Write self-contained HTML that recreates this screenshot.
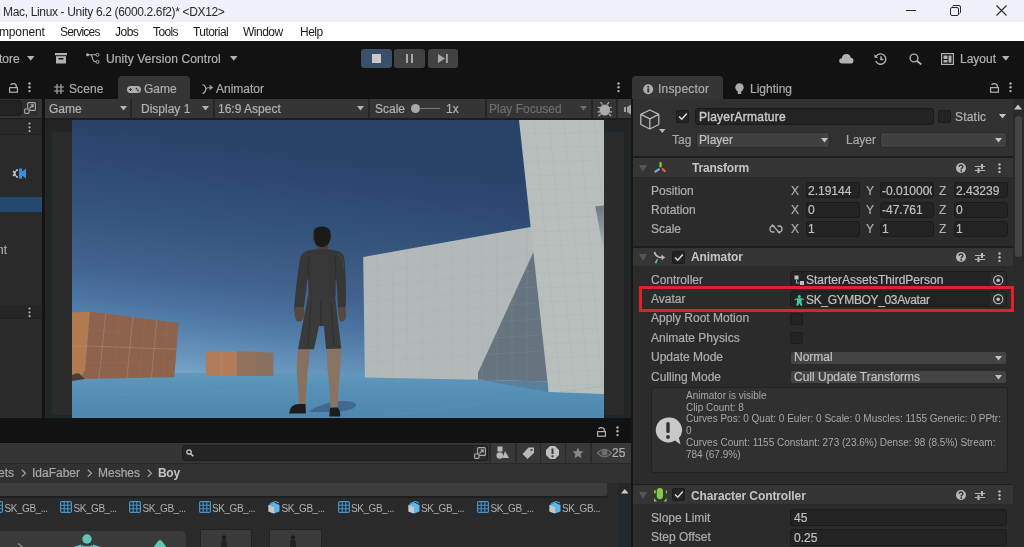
<!DOCTYPE html>
<html><head><meta charset="utf-8">
<style>
*{margin:0;padding:0;box-sizing:border-box}
html,body{width:1024px;height:547px;overflow:hidden;-webkit-font-smoothing:antialiased;background:#2b2b2b;font-family:"Liberation Sans",sans-serif;font-size:12px;color:#c4c4c4}
.a{position:absolute}
.t{position:absolute;white-space:nowrap;line-height:14px;-webkit-text-stroke:0.2px currentColor}
svg{position:absolute;overflow:visible}
#root{position:absolute;left:0;top:0;width:1024px;height:547px;will-change:transform}
.fld{background:#232323;border:1px solid #1b1b1b;border-radius:3px}
.drp{background:#444444;border:1px solid #2a2a2a;border-radius:3px}
</style></head><body>
<div id="root"><!-- ===== TITLE ===== -->
<div class="a" style="left:0;top:0;width:1024px;height:22px;background:#eef1f9"></div>
<div class="t" style="left:3px;top:5px;color:#2a2a2a;letter-spacing:-0.34px;-webkit-text-stroke:0">Mac, Linux - Unity 6.2 (6000.2.6f2)* &lt;DX12&gt;</div>
<div class="a" style="left:906px;top:10px;width:10px;height:1px;background:#2a2a2a"></div>
<svg style="left:950px;top:5px" width="12" height="11"><rect x="0.5" y="2.5" width="8" height="8" rx="1.5" fill="none" stroke="#2a2a2a" stroke-width="1"/><path d="M2.5 1.5 Q2.8 0.5 4 0.5 H9 Q10.5 0.5 10.5 2 V7 Q10.5 8 9.5 8.5" fill="none" stroke="#2a2a2a" stroke-width="1"/></svg>
<svg style="left:996px;top:5px" width="11" height="11"><path d="M0.5 0.5 L10.5 10.5 M10.5 0.5 L0.5 10.5" stroke="#2a2a2a" stroke-width="1.1"/></svg>

<!-- ===== MENU ===== -->
<div class="a" style="left:0;top:22px;width:1024px;height:19px;background:#ffffff"></div>
<div class="t" style="left:-1px;top:25px;color:#1a1a1a;-webkit-text-stroke:0;letter-spacing:-0.15px">mponent</div>
<div class="t" style="left:60px;top:25px;color:#1a1a1a;-webkit-text-stroke:0;letter-spacing:-0.8px">Services</div>
<div class="t" style="left:115px;top:25px;color:#1a1a1a;-webkit-text-stroke:0;letter-spacing:-0.5px">Jobs</div>
<div class="t" style="left:153px;top:25px;color:#1a1a1a;-webkit-text-stroke:0;letter-spacing:-0.6px">Tools</div>
<div class="t" style="left:193px;top:25px;color:#1a1a1a;-webkit-text-stroke:0;letter-spacing:-0.55px">Tutorial</div>
<div class="t" style="left:243px;top:25px;color:#1a1a1a;-webkit-text-stroke:0;letter-spacing:-0.5px">Window</div>
<div class="t" style="left:300px;top:25px;color:#1a1a1a;-webkit-text-stroke:0;letter-spacing:-0.5px">Help</div>

<!-- ===== TOOLBAR ===== -->
<div class="a" style="left:0;top:41px;width:1024px;height:35px;background:#121212"></div>
<div class="t" style="left:-1px;top:52px;color:#b2b2b2">tore</div>
<svg style="left:27px;top:56px" width="8" height="5"><path d="M0 0H7.5L3.75 4.8Z" fill="#b2b2b2"/></svg>
<svg style="left:55px;top:53px" width="12" height="11"><rect x="0" y="0" width="12" height="2.2" fill="#b2b2b2"/><rect x="1" y="3.2" width="10" height="7.3" fill="#b2b2b2"/><rect x="3.5" y="5" width="5" height="1.5" fill="#121212"/></svg>
<svg style="left:86px;top:53px" width="14" height="11"><circle cx="1.5" cy="1.8" r="1.5" fill="#b2b2b2"/><circle cx="11.5" cy="1.8" r="1.5" fill="none" stroke="#b2b2b2" stroke-width="1"/><circle cx="11.5" cy="8.8" r="1.5" fill="none" stroke="#b2b2b2" stroke-width="1"/><path d="M1.5 1.8H10 M5 1.8 L6.5 5 Q7 8.8 10 8.8" fill="none" stroke="#b2b2b2" stroke-width="1.1"/></svg>
<div class="t" style="left:106px;top:52px;color:#b2b2b2;letter-spacing:0.1px">Unity Version Control</div>
<svg style="left:230px;top:56px" width="8" height="5"><path d="M0 0H7.5L3.75 4.8Z" fill="#b2b2b2"/></svg>

<div class="a" style="left:361px;top:49px;width:31px;height:19px;border-radius:3px;background:#3a4f68"></div>
<div class="a" style="left:372px;top:54px;width:9px;height:9px;background:#c8c8c8"></div>
<div class="a" style="left:394px;top:49px;width:31px;height:19px;border-radius:3px;background:#424242"></div>
<div class="a" style="left:406px;top:54px;width:2px;height:9px;background:#a8a8a8"></div>
<div class="a" style="left:411px;top:54px;width:2px;height:9px;background:#a8a8a8"></div>
<div class="a" style="left:428px;top:49px;width:30px;height:19px;border-radius:3px;background:#424242"></div>
<svg style="left:438px;top:54px" width="11" height="10"><path d="M0 0 L7 4.5 L0 9Z" fill="#a8a8a8"/><rect x="8" y="0" width="1.8" height="9" fill="#a8a8a8"/></svg>

<svg style="left:839px;top:53px" width="15" height="11"><path d="M3.2 10.5 Q0.2 10.5 0.2 7.8 Q0.2 5.3 2.8 5.2 Q3.5 1 7.5 1 Q11.2 1 11.8 4.8 Q14.5 5 14.5 7.7 Q14.5 10.5 11.5 10.5Z" fill="#b2b2b2"/></svg>
<svg style="left:874px;top:53px" width="14" height="12"><path d="M2.3 3.2 A5.2 5.2 0 1 1 1.8 8" fill="none" stroke="#b2b2b2" stroke-width="1.4"/><path d="M0.3 1.2 L0.6 5 L4.2 4.4Z" fill="#b2b2b2"/><path d="M7 3.3 V6.5 H9.5" fill="none" stroke="#b2b2b2" stroke-width="1.5"/></svg>
<svg style="left:909px;top:53px" width="14" height="12"><circle cx="5" cy="5" r="3.9" fill="none" stroke="#b2b2b2" stroke-width="1.4"/><path d="M7.8 7.8 L12.3 11.5" stroke="#b2b2b2" stroke-width="1.8"/></svg>
<svg style="left:941px;top:53px" width="13" height="12"><rect x="0.6" y="0.6" width="11.8" height="10.8" fill="none" stroke="#b2b2b2" stroke-width="1.2"/><rect x="2.5" y="2.5" width="4" height="3.5" fill="#b2b2b2"/><rect x="2.5" y="7" width="4" height="2.5" fill="#b2b2b2"/><rect x="7.5" y="2.5" width="3" height="7" fill="#b2b2b2"/></svg>
<div class="t" style="left:960px;top:52px;color:#b2b2b2">Layout</div>
<svg style="left:1002px;top:56px" width="8" height="5"><path d="M0 0H7.5L3.75 4.8Z" fill="#b2b2b2"/></svg>

<!-- ===== TAB STRIP ===== -->
<div class="a" style="left:0;top:76px;width:1024px;height:23px;background:#121212"></div>
<svg style="left:9px;top:83px" width="9" height="10"><path d="M1.6 1.8 Q2.4 0.6 4.2 0.6 Q7.3 0.6 7.3 3.3 V4.6" fill="none" stroke="#b2b2b2" stroke-width="1.2"/><rect x="0.6" y="4.6" width="7.8" height="4.6" fill="none" stroke="#b2b2b2" stroke-width="1.2"/></svg>
<svg style="left:28px;top:82px" width="4" height="11"><circle cx="1.5" cy="1.5" r="1.2" fill="#b2b2b2"/><circle cx="1.5" cy="5.3" r="1.2" fill="#b2b2b2"/><circle cx="1.5" cy="9.1" r="1.2" fill="#b2b2b2"/></svg>
<svg style="left:54px;top:84px" width="10" height="10"><path d="M3 0 V10 M7 0 V10 M0 3 H10 M0 7 H10" stroke="#aaaaaa" stroke-width="1.2"/></svg>
<div class="t" style="left:69px;top:82px;color:#aaaaaa;letter-spacing:0.1px">Scene</div>
<div class="a" style="left:118px;top:76px;width:72px;height:23px;background:#353535;border-radius:4px 4px 0 0"></div>
<svg style="left:127px;top:86px" width="14" height="7"><path d="M3.5 0 H10.5 Q14 0 14 3.5 Q14 7 10.5 7 H3.5 Q0 7 0 3.5 Q0 0 3.5 0Z" fill="#adadad"/><path d="M2 3.5 H5 M3.5 2 V5" stroke="#353535" stroke-width="1"/><circle cx="9.5" cy="2.7" r="0.9" fill="#353535"/><circle cx="11" cy="4.5" r="0.9" fill="#353535"/></svg>
<div class="t" style="left:144px;top:82px;color:#adadad">Game</div>
<svg style="left:202px;top:84px" width="11" height="10"><path d="M0.5 0.5 Q3 1 4 5 Q4.5 3.5 9.5 3.5 M0.5 9.5 Q3 9 4 5" fill="none" stroke="#aaaaaa" stroke-width="1.2"/><path d="M7.5 1.5 L10.2 3.5 L7.5 5.5" fill="none" stroke="#aaaaaa" stroke-width="1.2"/></svg>
<div class="t" style="left:216px;top:82px;color:#aaaaaa">Animator</div>
<svg style="left:617px;top:82px" width="4" height="11"><circle cx="1.5" cy="1.5" r="1.2" fill="#b2b2b2"/><circle cx="1.5" cy="5.3" r="1.2" fill="#b2b2b2"/><circle cx="1.5" cy="9.1" r="1.2" fill="#b2b2b2"/></svg>
<div class="a" style="left:632px;top:76px;width:91px;height:23px;background:#353535;border-radius:4px 4px 0 0"></div>
<svg style="left:643px;top:84px" width="11" height="11"><circle cx="5.2" cy="5.2" r="5" fill="#adadad"/><rect x="4.3" y="4.3" width="1.9" height="4.2" fill="#353535"/><circle cx="5.2" cy="2.7" r="1" fill="#353535"/></svg>
<div class="t" style="left:658px;top:82px;color:#adadad;letter-spacing:0.2px">Inspector</div>
<svg style="left:735px;top:83px" width="9" height="12"><circle cx="4.5" cy="4.5" r="4.2" fill="#aaaaaa"/><rect x="2.8" y="8" width="3.4" height="3" fill="#aaaaaa"/></svg>
<div class="t" style="left:750px;top:82px;color:#aaaaaa">Lighting</div>
<svg style="left:990px;top:83px" width="9" height="10"><path d="M1.6 1.8 Q2.4 0.6 4.2 0.6 Q7.3 0.6 7.3 3.3 V4.6" fill="none" stroke="#b2b2b2" stroke-width="1.2"/><rect x="0.6" y="4.6" width="7.8" height="4.6" fill="none" stroke="#b2b2b2" stroke-width="1.2"/></svg>
<svg style="left:1009px;top:82px" width="4" height="11"><circle cx="1.5" cy="1.5" r="1.2" fill="#b2b2b2"/><circle cx="1.5" cy="5.3" r="1.2" fill="#b2b2b2"/><circle cx="1.5" cy="9.1" r="1.2" fill="#b2b2b2"/></svg>
<!-- ===== LEFT HIERARCHY ===== -->
<div class="a" style="left:0;top:99px;width:43px;height:319px;background:#2a2a2a"></div>
<div class="a" style="left:0;top:99px;width:43px;height:19px;background:#353535"></div>
<div class="a" style="left:-4px;top:100px;width:26px;height:16px;background:#232323;border:1px solid #1c1c1c;border-radius:3px"></div>
<div class="a" style="left:22px;top:100px;width:16px;height:16px;background:#2e2e2e;border-radius:3px"></div>
<svg style="left:24px;top:102px" width="12" height="12"><rect x="3.6" y="0.6" width="7.8" height="7.8" rx="1" fill="none" stroke="#a8a8a8" stroke-width="1.1"/><rect x="0.6" y="7" width="4.4" height="4.4" rx="0.8" fill="#2e2e2e" stroke="#a8a8a8" stroke-width="1.1"/><path d="M5.5 6.5 L9 3 M6.5 2.8 H9.2 V5.5" fill="none" stroke="#a8a8a8" stroke-width="1.1"/></svg>
<div class="a" style="left:0;top:118px;width:43px;height:1px;background:#1c1c1c"></div>
<div class="a" style="left:0;top:119px;width:43px;height:15px;background:#282828"></div>
<svg style="left:28px;top:122px" width="4" height="11"><circle cx="1.5" cy="1.5" r="1.1" fill="#b2b2b2"/><circle cx="1.5" cy="5.3" r="1.1" fill="#b2b2b2"/><circle cx="1.5" cy="9.1" r="1.1" fill="#b2b2b2"/></svg>
<div class="a" style="left:0;top:134px;width:43px;height:1px;background:#222"></div>
<svg style="left:12px;top:168px" width="15" height="11"><path d="M6 1.2 L4.3 1.2 L3.8 2.6 L2.6 3.2 L1.3 2.6 L0.6 4 L1.6 5 V6 L0.6 7 L1.3 8.4 L2.6 7.8 L3.8 8.4 L4.3 9.8 H6 V8.2 Q3.6 8 3.6 5.5 Q3.6 3 6 2.8Z" fill="#bdbdbd"/><path d="M7 0.5 H10 V3.5 L14 0.5 V10.5 L10 7.5 V10.5 H7Z" fill="#3d8fd8"/></svg>
<div class="a" style="left:0;top:197px;width:43px;height:15px;background:#234a6e"></div>
<div class="t" style="left:-3px;top:243px;color:#aaaaaa">nt</div>
<div class="a" style="left:0;top:305px;width:43px;height:14px;background:#252525;border-bottom:1px solid #222"></div>
<svg style="left:28px;top:307px" width="4" height="11"><circle cx="1.5" cy="1.5" r="1.1" fill="#b2b2b2"/><circle cx="1.5" cy="5.3" r="1.1" fill="#b2b2b2"/><circle cx="1.5" cy="9.1" r="1.1" fill="#b2b2b2"/></svg>
<div class="a" style="left:42px;top:99px;width:3px;height:320px;background:#141414"></div>

<!-- ===== GAME PANEL ===== -->
<div class="a" style="left:45px;top:99px;width:586px;height:319px;background:#2a2a2a"></div>
<div class="a" style="left:45px;top:99px;width:586px;height:19px;background:#353535"></div>
<div class="a" style="left:45px;top:118px;width:586px;height:2px;background:#1e1e1e"></div>
<div class="a" style="left:45px;top:120px;width:586px;height:298px;background:#242424"></div>
<div class="a" style="left:49px;top:129px;width:578px;height:288.5px;background:#2b2b2b;border:3px solid #20272b;border-radius:6px"></div>
<!-- toolbar separators -->
<div class="a" style="left:130px;top:99px;width:2px;height:19px;background:#262626"></div>
<div class="a" style="left:213px;top:99px;width:2px;height:19px;background:#262626"></div>
<div class="a" style="left:368px;top:99px;width:2px;height:19px;background:#262626"></div>
<div class="a" style="left:485px;top:99px;width:2px;height:19px;background:#262626"></div>
<div class="a" style="left:591px;top:99px;width:2px;height:19px;background:#262626"></div>
<div class="a" style="left:616px;top:99px;width:2px;height:19px;background:#262626"></div>
<div class="a" style="left:618px;top:99px;width:13px;height:19px;background:#3a3a3a"></div>
<div class="t" style="left:49px;top:102px;color:#b2b2b2">Game</div>
<svg style="left:120px;top:106px" width="8" height="5"><path d="M0 0H7L3.5 4.5Z" fill="#b2b2b2"/></svg>
<div class="t" style="left:141px;top:102px;color:#b2b2b2">Display 1</div>
<svg style="left:202px;top:106px" width="8" height="5"><path d="M0 0H7L3.5 4.5Z" fill="#b2b2b2"/></svg>
<div class="t" style="left:218px;top:102px;color:#b2b2b2">16:9 Aspect</div>
<svg style="left:357px;top:106px" width="8" height="5"><path d="M0 0H7L3.5 4.5Z" fill="#b2b2b2"/></svg>
<div class="t" style="left:375px;top:102px;color:#b2b2b2">Scale</div>
<div class="a" style="left:411px;top:104px;width:9px;height:9px;border-radius:50%;background:#a8a8a8"></div>
<div class="a" style="left:419px;top:108px;width:21px;height:1px;background:#7a7a7a"></div>
<div class="t" style="left:446px;top:102px;color:#b2b2b2">1x</div>
<div class="t" style="left:489px;top:102px;color:#6e6e6e">Play Focused</div>
<svg style="left:580px;top:106px" width="8" height="5"><path d="M0 0H7L3.5 4.5Z" fill="#6e6e6e"/></svg>
<svg style="left:597px;top:101px" width="16" height="16"><ellipse cx="7.8" cy="9" rx="5.2" ry="5.6" fill="#ababab"/><path d="M3.5 1.2 L5.5 3.6 M12 1.2 L10 3.6 M0.8 6 L3.2 7 M14.8 6 L12.4 7 M0.6 11.2 L3.2 10.6 M15 11.2 L12.4 10.6 M1.4 15 L3.8 13 M14.2 15 L11.8 13" stroke="#ababab" stroke-width="1.3"/></svg>
<svg style="left:624px;top:104px" width="8" height="11"><rect x="0" y="3" width="2" height="5" fill="#a0a0a0"/><path d="M3 3 L7 0.5 V10.5 L3 8Z" fill="#a0a0a0"/></svg>
<div class="a" style="left:631px;top:99px;width:2px;height:320px;background:#151515"></div>

<!-- game image -->
<div class="a" id="game" style="left:72px;top:120px;width:532px;height:298px;overflow:hidden">
<svg style="left:0;top:0" width="532" height="298" viewBox="0 0 532 298">
<defs>
<linearGradient id="sky" gradientUnits="userSpaceOnUse" x1="0" y1="0" x2="-31" y2="254">
<stop offset="0" stop-color="#29426a"/>
<stop offset="0.118" stop-color="#2d4870"/>
<stop offset="0.315" stop-color="#34537a"/>
<stop offset="0.551" stop-color="#42628e"/>
<stop offset="0.669" stop-color="#4a72a0"/>
<stop offset="0.846" stop-color="#6592bb"/>
<stop offset="0.945" stop-color="#7aa6c8"/>
<stop offset="1" stop-color="#86b0cc"/>
</linearGradient>
<linearGradient id="gnd" x1="0" y1="0" x2="0" y2="1">
<stop offset="0" stop-color="#6199be"/>
<stop offset="0.3" stop-color="#5891b7"/>
<stop offset="1" stop-color="#4f88ae"/>
</linearGradient>
<linearGradient id="strip" x1="0" y1="0" x2="0" y2="1">
<stop offset="0" stop-color="#6b7783"/>
<stop offset="1" stop-color="#b4babe"/>
</linearGradient>
</defs>
<rect x="0" y="0" width="532" height="254" fill="url(#sky)"/>
<rect x="0" y="253" width="532" height="45" fill="url(#gnd)"/>
<!-- big orange box -->
<path d="M0 192.5 L18 191.8 L13 250 Q10 256 6.5 259 L0 261Z" fill="#b27a4f"/>
<path d="M18 191.8 L106.6 203 L102.3 257.3 L6.5 259 Q10 256 13 250Z" fill="#8e624c"/>
<path d="M0 255 Q5 252 8 254 Q10 257 13 259 L0 261Z" fill="#3a3430" opacity="0.85"/>
<g stroke="#a98a7c" stroke-width="0.8" fill="none" opacity="0.75">
<path d="M33.7 193.8 L27 258.6 M60.8 197.2 L55 258.2 M84.7 200.2 L79.5 257.8"/>
<path d="M15.5 226 L105 229.3 M0 226 L15.5 226"/>
</g>
<g stroke="#9a7564" stroke-width="0.6" fill="none" opacity="0.5">
<path d="M47.5 195.5 L41.5 258.4 M73 198.7 L67.5 258 M95.5 201.6 L91 257.6"/>
<path d="M17 210 L106 216.5 M13.5 242.5 L103.5 242"/>
</g>
<!-- small box -->
<path d="M133.8 231.8 L165 231 L165 256 L133.8 256Z" fill="#b07c5a"/>
<path d="M165 231 L184 231.8 L184 256 L165 256Z" fill="#93725d"/>
<path d="M184 231.8 L201.5 232.8 L201.5 255.8 L184 256Z" fill="#89705f"/>
<path d="M149 231.4 V256" stroke="#d09a78" stroke-width="0.6" opacity="0.5"/>
<!-- character shadow -->
<path d="M236 292 Q250 282 270 281 Q285 281 284 286 Q280 291 262 292Z" fill="#3b5f82" opacity="0.75"/>
<!-- character -->
<g>
<path d="M226.5 229 L238 229 Q237.2 240 235.8 250 Q234.5 265 233.5 284 L227 284 Q226.5 268 225 255 Q224 242 226.5 229Z" fill="#87705f"/>
<path d="M255 228 L269 228 Q268.8 242 267.8 255 Q266.5 272 265.5 287 L258.5 287 Q258 272 256.5 260 Q254.8 245 255 228Z" fill="#8a7362"/>
<path d="M218 290 Q219 285 226 284 L233.5 284 L234 293.5 L217 293.5Z" fill="#1c1c1c"/>
<path d="M258 288 L265.5 287.5 Q268.5 290 268.3 296.5 L257.2 296.5Z" fill="#1d1d1d"/>
<path d="M245 121 H256 V133 H245Z" fill="#4a403a"/><ellipse cx="241.8" cy="118" rx="1.6" ry="2.6" fill="#4f433c"/><ellipse cx="258.4" cy="118" rx="1.6" ry="2.6" fill="#4f433c"/>
<path d="M241.5 113 Q241.5 106.4 250 106.4 Q258.7 106.4 258.7 114 Q258.7 121 256 124.5 Q253 127 250 127 Q246 127 243.5 124 Q241.5 120 241.5 113Z" fill="#1a1a1a"/>
<path d="M227.8 140 Q228.5 132 236 130.5 Q242 129 250 129.3 Q258 129 264 130.5 Q272 132 272.6 140 Q274.5 162 273.8 187 L265.8 187 Q265.5 170 263.8 153 L263.5 177 L236.5 177 L236.2 153 Q234 170 232 187 L222.2 187 Q224.5 160 227.8 140Z" fill="#373737"/>
<path d="M236.2 160 Q236 145 237 136 M263.8 160 Q264 145 263 136" stroke="#2d2d2d" stroke-width="1" fill="none"/><path d="M266 134 Q271 136 272 150" stroke="#444" stroke-width="1.5" fill="none" opacity="0.7"/>
<path d="M222 187 H232 L232.5 197 Q229 203 224.5 201 Q222 196 222 187Z" fill="#54483f"/>
<path d="M266 187 H273.5 L274 197 Q272 203 268 201 Q266 196 266 187Z" fill="#54483f"/>
<path d="M236 176 H263 L269.3 228.5 L254 229 L252 206 L247 206 L242 229.2 L226 229.2Z" fill="#3a3a3a"/>
<path d="M239 183 L236 226 M259 183 L262 226 M249 180 V205" stroke="#2a2a2a" stroke-width="1" fill="none" opacity="0.8"/>
</g>
<!-- walls -->
<path d="M291.2 137.1 L458.6 107 L470 106 L490 272 L405.8 259.7 L292.9 257.5Z" fill="#b3b9b8"/>
<path d="M461.5 132 L406 252.8 L406 259.8 L476 261.5 L490 261.5 L490 132Z" fill="#66747f"/>
<path d="M406 259.8 L476 261.5 L476.6 272 Z" fill="#587f9e"/>
<path d="M447 0 L532 0 L532 274 L476.6 272Z" fill="#b8bebc"/>
<path d="M523.3 86.6 L532 85.5 L532 133Z" fill="url(#strip)"/>
<g stroke="#9fa5a5" stroke-width="0.5" fill="none" opacity="0.32">
<path d="M462 0 L489 272.5 M477 0 L503 273 M492 0 L517 273.3 M507 0 L531 273.6 M522 0 L532 100"/>
<path d="M448 14 L532 12 M449.5 28 L532 26 M451 42 L532 40 M452.5 56 L532 54 M454 70 L532 68 M455.5 84 L532 82 M457 98 L532 96 M458.5 112 L532 110 M460 126 L532 124 M461.5 140 L532 138 M463 154 L532 152 M464.5 168 L532 166 M466 182 L532 180 M467.5 196 L532 194 M469 210 L532 208 M470.5 224 L532 222 M472 238 L532 236 M473.5 252 L532 250 M475 266 L532 264"/>
<path d="M305 134.6 L306 257.8 M320 132 L321 258 M335 129.2 L336 258.3 M350 126.5 L350.5 258.5 M365 123.8 L365.5 258.8 M380 121 L380.3 259 M395 118.4 L395.2 259.3 M410 115.6 L410 259.6 M425 113 L425 260 M440 110.3 L440 260.3 M455 107.6 L455 260.6"/>
<path d="M292 152 L460 135 M292 167 L461 151 M292 182 L462 167 M292 197 L464 183 M292 212 L466 199 M292 227 L467 215 M292 242 L469 231"/>
</g>
<!-- ground grid lines -->
<g stroke="#6f9fc0" stroke-width="0.5" opacity="0.4" fill="none">
<path d="M0 276 L200 270 M300 298 L532 266"/>
</g>
</svg>
</div>
<!-- ===== INSPECTOR ===== -->
<div class="a" style="left:633px;top:99px;width:391px;height:448px;background:#2b2b2b"></div>
<div class="a" style="left:633px;top:99px;width:380px;height:57px;background:#313131"></div>
<svg style="left:640px;top:109px" width="26" height="25"><path d="M9.8 1 L18.8 5.3 L18.8 15.5 L9.8 20 L0.8 15.5 L0.8 5.3Z M0.8 5.3 L9.8 9.8 L18.8 5.3 M9.8 9.8 V20" fill="none" stroke="#b8b8b8" stroke-width="1.3" stroke-linejoin="round"/><path d="M19 20 H25.5 L22.25 24Z" fill="#b8b8b8"/></svg>
<div class="a" style="left:676px;top:110px;width:13px;height:13px;background:#232323;border:1px solid #1c1c1c;border-radius:2px"></div>
<svg style="left:678px;top:112px" width="10" height="9"><path d="M1 4.5 L3.8 7.2 L8.8 1.5" fill="none" stroke="#d8d8d8" stroke-width="1.5"/></svg>
<div class="a" style="left:695px;top:108px;width:239px;height:16.5px;background:#232323;border:1px solid #1b1b1b;border-radius:3px"></div>
<div class="t" style="left:699px;top:110px;color:#c8c8c8;letter-spacing:0.25px;-webkit-text-stroke:0.4px currentColor">PlayerArmature</div>
<div class="a" style="left:938px;top:110px;width:13px;height:13px;background:#232323;border:1px solid #1c1c1c;border-radius:2px"></div>
<div class="t" style="left:955px;top:110px;color:#b4b4b4;letter-spacing:0.2px">Static</div>
<svg style="left:999px;top:114px" width="8" height="5"><path d="M0 0H7L3.5 4.5Z" fill="#c4c4c4"/></svg>
<div class="t" style="left:672px;top:133px;color:#a8a8a8">Tag</div>
<div class="a" style="left:696px;top:132px;width:134px;height:15.5px;background:#404040;border:1px solid #2a2a2a;border-radius:3px"></div>
<div class="t" style="left:699px;top:133px;color:#c0c0c0">Player</div>
<svg style="left:821px;top:138px" width="8" height="5"><path d="M0 0H7L3.5 4.5Z" fill="#c4c4c4"/></svg>
<div class="t" style="left:846px;top:133px;color:#a8a8a8">Layer</div>
<div class="a" style="left:880px;top:132px;width:127px;height:15.5px;background:#404040;border:1px solid #2a2a2a;border-radius:3px"></div>
<svg style="left:995px;top:138px" width="8" height="5"><path d="M0 0H7L3.5 4.5Z" fill="#c4c4c4"/></svg>

<!-- scrollbar -->
<div class="a" style="left:1013px;top:99px;width:11px;height:448px;background:#2a2a2a"></div>
<svg style="left:1014px;top:104px" width="9" height="6"><path d="M0 5.5H8L4 0.5Z" fill="#c4c4c4"/></svg>
<div class="a" style="left:1015px;top:116px;width:7px;height:141px;background:#454545;border-radius:4px"></div>

<!-- Transform -->
<div class="a" style="left:633px;top:156.3px;width:380px;height:1.8px;background:#1b1d20"></div>
<div class="a" style="left:633px;top:158px;width:380px;height:19.5px;background:#353535;border-bottom:1px solid #282a2c"></div>
<svg style="left:639px;top:165px" width="9" height="8"><path d="M0 0H8L4 7Z" fill="#555555"/></svg>
<svg style="left:654px;top:162px" width="13" height="11"><rect x="5.4" y="0" width="2.3" height="5.6" rx="1.15" fill="#86c83c"/><path d="M4.8 7.4 L1.4 9.6" stroke="#68b4e2" stroke-width="2.2" stroke-linecap="round"/><path d="M8.6 7.2 L11.4 9.4" stroke="#d9653a" stroke-width="2.2" stroke-linecap="round" stroke-dasharray="1.2 0.6"/></svg>
<div class="t" style="left:692px;top:161px;color:#c4c4c4;font-weight:bold;-webkit-text-stroke:0;letter-spacing:-0.2px">Transform</div>
<svg style="left:956px;top:163px" width="11" height="11"><circle cx="5" cy="5" r="5" fill="#b8b8b8"/><path d="M3.2 3.8 Q3.2 2 5 2 Q6.9 2 6.9 3.7 Q6.9 4.8 5.3 5.4 V6.4" fill="none" stroke="#353535" stroke-width="1.4"/><circle cx="5.2" cy="8" r="0.9" fill="#353535"/></svg>
<svg style="left:975px;top:163px" width="11" height="11"><path d="M0 3.5 H10 M0 7.5 H10" stroke="#b8b8b8" stroke-width="1.2"/><rect x="6" y="1" width="2" height="5" fill="#b8b8b8"/><rect x="2.5" y="5" width="2" height="5" fill="#b8b8b8"/></svg>
<svg style="left:998px;top:163px" width="4" height="11"><circle cx="1.5" cy="1.5" r="1.2" fill="#b8b8b8"/><circle cx="1.5" cy="5.2" r="1.2" fill="#b8b8b8"/><circle cx="1.5" cy="8.9" r="1.2" fill="#b8b8b8"/></svg>

<div class="t" style="left:651px;top:184px;color:#aeaeae">Position</div>
<div class="t" style="left:651px;top:203px;color:#aeaeae">Rotation</div>
<div class="t" style="left:651px;top:222px;color:#aeaeae">Scale</div>
<svg style="left:769px;top:224px" width="14" height="10"><path d="M5.5 2 H4 Q1 2 1 5 Q1 8 4 8 H5.5 M8.5 2 H10 Q13 2 13 5 Q13 8 10 8 H8.5" fill="none" stroke="#b0b0b0" stroke-width="1.3"/><path d="M3 0.5 L11 9.5" stroke="#b0b0b0" stroke-width="1.2"/></svg>

<div class="t" style="left:791px;top:184px;color:#aeaeae">X</div>
<div class="t" style="left:866px;top:184px;color:#aeaeae">Y</div>
<div class="t" style="left:939px;top:184px;color:#aeaeae">Z</div>
<div class="t" style="left:791px;top:203px;color:#aeaeae">X</div>
<div class="t" style="left:866px;top:203px;color:#aeaeae">Y</div>
<div class="t" style="left:939px;top:203px;color:#aeaeae">Z</div>
<div class="t" style="left:791px;top:222px;color:#aeaeae">X</div>
<div class="t" style="left:866px;top:222px;color:#aeaeae">Y</div>
<div class="t" style="left:939px;top:222px;color:#aeaeae">Z</div>

<div class="a fld" style="left:806px;top:182px;width:54px;height:16px"></div>
<div class="a fld" style="left:880px;top:182px;width:54px;height:16px"></div>
<div class="a fld" style="left:954px;top:182px;width:54px;height:16px"></div>
<div class="a fld" style="left:806px;top:201.5px;width:54px;height:16px"></div>
<div class="a fld" style="left:880px;top:201.5px;width:54px;height:16px"></div>
<div class="a fld" style="left:954px;top:201.5px;width:54px;height:16px"></div>
<div class="a fld" style="left:806px;top:221px;width:54px;height:16px"></div>
<div class="a fld" style="left:880px;top:221px;width:54px;height:16px"></div>
<div class="a fld" style="left:954px;top:221px;width:54px;height:16px"></div>
<div class="t" style="left:808px;top:184px;color:#c0c0c0">2.19144</div>
<div class="a" style="left:882px;top:184px;width:50px;height:14px;overflow:hidden"><div class="t" style="left:0;top:0;color:#c0c0c0">-0.010000</div></div>
<div class="t" style="left:956px;top:184px;color:#c0c0c0">2.43239</div>
<div class="t" style="left:808px;top:203px;color:#c0c0c0">0</div>
<div class="t" style="left:882px;top:203px;color:#c0c0c0">-47.761</div>
<div class="t" style="left:956px;top:203px;color:#c0c0c0">0</div>
<div class="t" style="left:808px;top:222px;color:#c0c0c0">1</div>
<div class="t" style="left:882px;top:222px;color:#c0c0c0">1</div>
<div class="t" style="left:956px;top:222px;color:#c0c0c0">1</div>

<!-- Animator -->
<div class="a" style="left:633px;top:246px;width:380px;height:2px;background:#1b1d20"></div>
<div class="a" style="left:633px;top:248px;width:380px;height:19px;background:#353535;border-bottom:1px solid #282a2c"></div>
<svg style="left:639px;top:254px" width="9" height="8"><path d="M0 0H8L4 7Z" fill="#555555"/></svg>
<svg style="left:653px;top:251px" width="14" height="13"><path d="M1.4 1 Q2.2 4.6 5.4 5.9 Q6.8 6.4 10 6.4" fill="none" stroke="#b8b8b8" stroke-width="1.6"/><path d="M8.6 3.6 L12.2 6.4 L8.6 9.2Z" fill="#b8b8b8"/><path d="M4.6 8.3 Q3.3 9.8 2.6 12.2" fill="none" stroke="#52c7b0" stroke-width="1.7"/></svg>
<div class="a" style="left:672px;top:250.5px;width:13px;height:13px;background:#232323;border:1px solid #1c1c1c;border-radius:2px"></div>
<svg style="left:674px;top:252.5px" width="10" height="9"><path d="M1 4.5 L3.8 7.2 L8.8 1.5" fill="none" stroke="#d8d8d8" stroke-width="1.5"/></svg>
<div class="t" style="left:691px;top:250px;color:#c4c4c4;font-weight:bold;-webkit-text-stroke:0;letter-spacing:-0.1px">Animator</div>
<svg style="left:956px;top:252px" width="11" height="11"><circle cx="5" cy="5" r="5" fill="#b8b8b8"/><path d="M3.2 3.8 Q3.2 2 5 2 Q6.9 2 6.9 3.7 Q6.9 4.8 5.3 5.4 V6.4" fill="none" stroke="#353535" stroke-width="1.4"/><circle cx="5.2" cy="8" r="0.9" fill="#353535"/></svg>
<svg style="left:975px;top:252px" width="11" height="11"><path d="M0 3.5 H10 M0 7.5 H10" stroke="#b8b8b8" stroke-width="1.2"/><rect x="6" y="1" width="2" height="5" fill="#b8b8b8"/><rect x="2.5" y="5" width="2" height="5" fill="#b8b8b8"/></svg>
<svg style="left:998px;top:252px" width="4" height="11"><circle cx="1.5" cy="1.5" r="1.2" fill="#b8b8b8"/><circle cx="1.5" cy="5.2" r="1.2" fill="#b8b8b8"/><circle cx="1.5" cy="8.9" r="1.2" fill="#b8b8b8"/></svg>

<div class="t" style="left:651px;top:273px;color:#aeaeae">Controller</div>
<div class="t" style="left:651px;top:292px;color:#aeaeae">Avatar</div>
<div class="t" style="left:651px;top:311px;color:#aeaeae">Apply Root Motion</div>
<div class="t" style="left:651px;top:331px;color:#aeaeae">Animate Physics</div>
<div class="t" style="left:651px;top:350px;color:#aeaeae">Update Mode</div>
<div class="t" style="left:651px;top:369.5px;color:#aeaeae">Culling Mode</div>

<div class="a fld" style="left:790px;top:271px;width:217px;height:15.5px"></div>
<div class="a" style="left:990px;top:272px;width:16px;height:13.5px;background:#2a2a2a"></div>
<svg style="left:993px;top:275px" width="11" height="11"><circle cx="5.2" cy="5.2" r="4.6" fill="none" stroke="#c0c0c0" stroke-width="1.1"/><circle cx="5.2" cy="5.2" r="1.8" fill="#c0c0c0"/></svg>
<svg style="left:794px;top:275px" width="11" height="11"><rect x="0.5" y="0.5" width="4" height="4" fill="#c0c0c0"/><rect x="6" y="6" width="4" height="4" fill="#c0c0c0"/><path d="M2.5 5 V8 H5.5" fill="none" stroke="#4fc9b8" stroke-width="1.1"/></svg>
<div class="t" style="left:806px;top:273px;color:#c0c0c0">StarterAssetsThirdPerson</div>

<div class="a fld" style="left:790px;top:291px;width:217px;height:15.5px"></div>
<div class="a" style="left:990px;top:292px;width:16px;height:13.5px;background:#2a2a2a"></div>
<svg style="left:993px;top:294px" width="11" height="11"><circle cx="5.2" cy="5.2" r="4.6" fill="none" stroke="#c0c0c0" stroke-width="1.1"/><circle cx="5.2" cy="5.2" r="1.8" fill="#c0c0c0"/></svg>
<svg style="left:793.5px;top:294.5px" width="11" height="11"><circle cx="5.3" cy="1.5" r="1.5" fill="#4cc4ac"/><path d="M0.3 4.2 L3 3.3 H7.6 L10.3 4.2 L10 5 L7.6 4.6 V7.5 L8.3 10.8 H6.6 L5.3 8 L4 10.8 H2.3 L3 7.5 V4.6 L0.6 5Z" fill="#4cc4ac"/></svg>
<div class="t" style="left:806px;top:293px;color:#c0c0c0;letter-spacing:-0.35px">SK_GYMBOY_03Avatar</div>

<div class="a" style="left:639px;top:286px;width:375px;height:26px;border:3px solid #e0202a"></div>

<div class="a" style="left:790px;top:313px;width:13px;height:12px;background:#232323;border:1px solid #1c1c1c;border-radius:2px"></div>
<div class="a" style="left:790px;top:332px;width:13px;height:12px;background:#232323;border:1px solid #1c1c1c;border-radius:2px"></div>
<div class="a drp" style="left:790px;top:350.5px;width:217px;height:14px"></div>
<div class="t" style="left:794px;top:350px;color:#c0c0c0">Normal</div>
<svg style="left:995px;top:356px" width="8" height="5"><path d="M0 0H7L3.5 4.5Z" fill="#c4c4c4"/></svg>
<div class="a drp" style="left:790px;top:369.5px;width:217px;height:14px"></div>
<div class="t" style="left:794px;top:369.5px;color:#c0c0c0">Cull Update Transforms</div>
<svg style="left:995px;top:375px" width="8" height="5"><path d="M0 0H7L3.5 4.5Z" fill="#c4c4c4"/></svg>

<!-- help box -->
<div class="a" style="left:651px;top:387px;width:357px;height:86px;background:#303030;border:1px solid #222;border-radius:3px"></div>
<svg style="left:655px;top:417px" width="28" height="29"><path d="M13 0.5 A12.5 12.5 0 1 0 20 23.5 L25.5 27.5 L24 21 A12.5 12.5 0 0 0 13 0.5Z" fill="#c8c8c8"/><rect x="11.3" y="5" width="3.4" height="11" rx="1.5" fill="#303030"/><circle cx="13" cy="20" r="1.9" fill="#303030"/></svg>
<div class="a" style="left:686px;top:390px;width:318px;color:#a8a8a8;font-size:10px;line-height:11.7px;white-space:normal">Animator is visible<br>Clip Count: 8<br>Curves Pos: 0 Quat: 0 Euler: 0 Scale: 0 Muscles: 1155 Generic: 0 PPtr:<br>0<br>Curves Count: 1155 Constant: 273 (23.6%) Dense: 98 (8.5%) Stream:<br>784 (67.9%)</div>

<!-- Character Controller -->
<div class="a" style="left:633px;top:483.8px;width:380px;height:1.4px;background:#1b1f22"></div>
<div class="a" style="left:633px;top:485.2px;width:380px;height:19.8px;background:#353535;border-bottom:1px solid #282c2f"></div>
<svg style="left:639px;top:492px" width="9" height="8"><path d="M0 0H8L4 7Z" fill="#555555"/></svg>
<svg style="left:654px;top:488px" width="13" height="14"><rect x="2.8" y="0" width="6.2" height="11.2" rx="3.1" fill="#86c84a"/><path d="M0 2.4 L1.8 2.2 V5.5 L0 5.2Z M11.8 2.2 L13 2.6 V5.2 L11.8 5.5Z M0 10 L3 13.6 H0Z M12.6 10 L9.6 13.6 H12.6Z" fill="#86c84a"/></svg>
<div class="a" style="left:672px;top:488px;width:13px;height:13px;background:#232323;border:1px solid #1c1c1c;border-radius:2px"></div>
<svg style="left:674px;top:490px" width="10" height="9"><path d="M1 4.5 L3.8 7.2 L8.8 1.5" fill="none" stroke="#d8d8d8" stroke-width="1.5"/></svg>
<div class="t" style="left:691px;top:488.5px;color:#c4c4c4;font-weight:bold;-webkit-text-stroke:0;letter-spacing:-0.1px">Character Controller</div>
<svg style="left:956px;top:490px" width="11" height="11"><circle cx="5" cy="5" r="5" fill="#b8b8b8"/><path d="M3.2 3.8 Q3.2 2 5 2 Q6.9 2 6.9 3.7 Q6.9 4.8 5.3 5.4 V6.4" fill="none" stroke="#353535" stroke-width="1.4"/><circle cx="5.2" cy="8" r="0.9" fill="#353535"/></svg>
<svg style="left:975px;top:490px" width="11" height="11"><path d="M0 3.5 H10 M0 7.5 H10" stroke="#b8b8b8" stroke-width="1.2"/><rect x="6" y="1" width="2" height="5" fill="#b8b8b8"/><rect x="2.5" y="5" width="2" height="5" fill="#b8b8b8"/></svg>
<svg style="left:998px;top:490px" width="4" height="11"><circle cx="1.5" cy="1.5" r="1.2" fill="#b8b8b8"/><circle cx="1.5" cy="5.2" r="1.2" fill="#b8b8b8"/><circle cx="1.5" cy="8.9" r="1.2" fill="#b8b8b8"/></svg>
<div class="t" style="left:651px;top:510.5px;color:#aeaeae">Slope Limit</div>
<div class="t" style="left:651px;top:530px;color:#aeaeae">Step Offset</div>
<div class="a fld" style="left:790px;top:509px;width:217px;height:17px"></div>
<div class="a fld" style="left:790px;top:528.5px;width:217px;height:17px"></div>
<div class="t" style="left:794px;top:511px;color:#c0c0c0">45</div>
<div class="t" style="left:794px;top:530.5px;color:#c0c0c0">0.25</div>
<!-- ===== PROJECT PANEL ===== -->
<div class="a" style="left:0;top:418px;width:633px;height:25px;background:#121212"></div>
<svg style="left:597px;top:427px" width="9" height="10"><path d="M1.6 1.8 Q2.4 0.6 4.2 0.6 Q7.3 0.6 7.3 3.3 V4.6" fill="none" stroke="#b2b2b2" stroke-width="1.2"/><rect x="0.6" y="4.6" width="7.8" height="4.6" fill="none" stroke="#b2b2b2" stroke-width="1.2"/></svg>
<svg style="left:616px;top:426px" width="4" height="11"><circle cx="1.5" cy="1.5" r="1.2" fill="#b2b2b2"/><circle cx="1.5" cy="5.3" r="1.2" fill="#b2b2b2"/><circle cx="1.5" cy="9.1" r="1.2" fill="#b2b2b2"/></svg>
<div class="a" style="left:0;top:443px;width:631px;height:20px;background:#353535"></div>
<div class="a" style="left:182px;top:445px;width:306px;height:16px;background:#242424;border:1px solid #1c1c1c;border-radius:3px"></div>
<svg style="left:186px;top:449px" width="8" height="8"><circle cx="3" cy="3" r="2.2" fill="none" stroke="#c8c8c8" stroke-width="1.3"/><path d="M4.5 4.5 L7.3 7.3" stroke="#c8c8c8" stroke-width="1.6"/></svg>
<div class="a" style="left:473px;top:446px;width:14px;height:14px;background:#2c2c2c;border-radius:2px"></div>
<svg style="left:474px;top:447px" width="12" height="12"><rect x="3.6" y="0.6" width="7.8" height="7.8" rx="1" fill="none" stroke="#a8a8a8" stroke-width="1.1"/><rect x="0.6" y="7" width="4.4" height="4.4" rx="0.8" fill="#2c2c2c" stroke="#a8a8a8" stroke-width="1.1"/><path d="M5.5 6.5 L9 3 M6.5 2.8 H9.2 V5.5" fill="none" stroke="#a8a8a8" stroke-width="1.1"/></svg>
<div class="a" style="left:489px;top:443px;width:2px;height:20px;background:#2a2a2a"></div>
<div class="a" style="left:491px;top:443px;width:24px;height:20px;background:#383838"></div>
<div class="a" style="left:515px;top:443px;width:2px;height:20px;background:#2a2a2a"></div>
<div class="a" style="left:517px;top:443px;width:23px;height:20px;background:#383838"></div>
<div class="a" style="left:540px;top:443px;width:1px;height:20px;background:#2a2a2a"></div>
<div class="a" style="left:541px;top:443px;width:24px;height:20px;background:#383838"></div>
<div class="a" style="left:565px;top:443px;width:1px;height:20px;background:#2a2a2a"></div>
<div class="a" style="left:566px;top:443px;width:24px;height:20px;background:#383838"></div>
<div class="a" style="left:590px;top:443px;width:2px;height:20px;background:#2a2a2a"></div>
<div class="a" style="left:592px;top:443px;width:39px;height:20px;background:#383838"></div>
<svg style="left:496px;top:446px" width="14" height="13"><rect x="1.5" y="0.5" width="5" height="5" fill="#b8b8b8"/><circle cx="3.8" cy="9.5" r="3.3" fill="#b8b8b8"/><path d="M9 5 L13 12 H6.5Z" fill="#b8b8b8"/></svg>
<svg style="left:522px;top:447px" width="13" height="12"><path d="M6.5 0.5 H12 V6 L5.5 12 L0.5 7Z" fill="#b8b8b8"/><circle cx="9.5" cy="3" r="1.1" fill="#383838"/></svg>
<svg style="left:546px;top:446px" width="13" height="13"><path d="M4 0 H9 L13 4 V9 L9 13 H4 L0 9 V4Z" fill="#c0c0c0"/><rect x="5.5" y="2.5" width="2" height="5.5" fill="#383838"/><rect x="5.5" y="9.3" width="2" height="2" fill="#383838"/></svg>
<svg style="left:572px;top:447px" width="12" height="12"><path d="M6 0.5 L7.6 4.3 L11.6 4.5 L8.5 7.1 L9.5 11.2 L6 9 L2.5 11.2 L3.5 7.1 L0.4 4.5 L4.4 4.3Z" fill="#8a8a8a"/></svg>
<svg style="left:597px;top:448px" width="15" height="10"><path d="M0.5 5 Q7.5 -2.5 14.5 5 Q7.5 12.5 0.5 5Z" fill="none" stroke="#6e6e6e" stroke-width="1.2"/><circle cx="7.5" cy="4.5" r="3" fill="#6e6e6e"/></svg>
<div class="t" style="left:612px;top:446px;color:#b0b0b0">25</div>

<div class="a" style="left:0;top:463px;width:631px;height:20px;background:#313131;border-top:1px solid #272727"></div>
<div class="t" style="left:-2px;top:466px;color:#a8a8a8">ets</div>
<svg style="left:21px;top:469px" width="6" height="9"><path d="M0.8 0.8 L4.5 4.3 L0.8 7.8" fill="none" stroke="#a0a0a0" stroke-width="1.2"/></svg>
<div class="t" style="left:32px;top:466px;color:#a8a8a8">IdaFaber</div>
<svg style="left:87px;top:469px" width="6" height="9"><path d="M0.8 0.8 L4.5 4.3 L0.8 7.8" fill="none" stroke="#a0a0a0" stroke-width="1.2"/></svg>
<div class="t" style="left:98px;top:466px;color:#a8a8a8">Meshes</div>
<svg style="left:147px;top:469px" width="6" height="9"><path d="M0.8 0.8 L4.5 4.3 L0.8 7.8" fill="none" stroke="#a0a0a0" stroke-width="1.2"/></svg>
<div class="t" style="left:158px;top:466px;color:#c4c4c4;font-weight:bold;letter-spacing:-0.3px;-webkit-text-stroke:0">Boy</div>

<div class="a" style="left:0;top:483px;width:607px;height:14px;background:#3d3d3d;border-radius:0 0 5px 0"></div>
<div class="a" style="left:0;top:497px;width:618px;height:50px;background:#2a2a2a"></div>
<div class="a" style="left:0;top:496px;width:608px;height:2px;background:#1f1f1f;border-radius:0 0 4px 0"></div>
<div class="a" style="left:618px;top:483px;width:13px;height:64px;background:#25282b"></div>
<svg style="left:621px;top:489px" width="8" height="5"><path d="M0 4.5H7.5L3.75 0Z" fill="#c8c8c8"/></svg>
<div class="a" style="left:631px;top:418px;width:2px;height:129px;background:#151515"></div>

<svg style="left:-9px;top:501px" width="12" height="12"><rect x="0.6" y="0.6" width="10.8" height="10.8" rx="1.2" fill="#1e2a33" stroke="#4b93c8" stroke-width="1.2"/><path d="M4.2 0.6 V11.4 M7.8 0.6 V11.4 M0.6 4.2 H11.4 M0.6 7.8 H11.4" stroke="#4b93c8" stroke-width="1.1"/></svg>
<div class="t" style="left:4.5px;top:503px;font-size:10px;line-height:11px;color:#b0b0b0;letter-spacing:-0.45px;-webkit-text-stroke:0">SK_GB_...</div>
<svg style="left:60px;top:501px" width="12" height="12"><rect x="0.6" y="0.6" width="10.8" height="10.8" rx="1.2" fill="#1e2a33" stroke="#4b93c8" stroke-width="1.2"/><path d="M4.2 0.6 V11.4 M7.8 0.6 V11.4 M0.6 4.2 H11.4 M0.6 7.8 H11.4" stroke="#4b93c8" stroke-width="1.1"/></svg>
<div class="t" style="left:73.5px;top:503px;font-size:10px;line-height:11px;color:#b0b0b0;letter-spacing:-0.45px;-webkit-text-stroke:0">SK_GB_...</div>
<svg style="left:129px;top:501px" width="12" height="12"><rect x="0.6" y="0.6" width="10.8" height="10.8" rx="1.2" fill="#1e2a33" stroke="#4b93c8" stroke-width="1.2"/><path d="M4.2 0.6 V11.4 M7.8 0.6 V11.4 M0.6 4.2 H11.4 M0.6 7.8 H11.4" stroke="#4b93c8" stroke-width="1.1"/></svg>
<div class="t" style="left:142.5px;top:503px;font-size:10px;line-height:11px;color:#b0b0b0;letter-spacing:-0.45px;-webkit-text-stroke:0">SK_GB_...</div>
<svg style="left:198.5px;top:501px" width="12" height="12"><rect x="0.6" y="0.6" width="10.8" height="10.8" rx="1.2" fill="#1e2a33" stroke="#4b93c8" stroke-width="1.2"/><path d="M4.2 0.6 V11.4 M7.8 0.6 V11.4 M0.6 4.2 H11.4 M0.6 7.8 H11.4" stroke="#4b93c8" stroke-width="1.1"/></svg>
<div class="t" style="left:212.0px;top:503px;font-size:10px;line-height:11px;color:#b0b0b0;letter-spacing:-0.45px;-webkit-text-stroke:0">SK_GB_...</div>
<svg style="left:268px;top:501px" width="12" height="13"><path d="M6 1.5 L11.5 4 V10.5 L6 12.5 L0.5 10.5 V4Z" fill="#5fb5e8"/><path d="M0.5 4 L6 6.2 V12.5 L0.5 10.5Z" fill="#c8c8c8"/><path d="M2 2.5 L7.5 0.5 L11 2" fill="none" stroke="#5fb5e8" stroke-width="1"/></svg>
<div class="t" style="left:281.5px;top:503px;font-size:10px;line-height:11px;color:#b0b0b0;letter-spacing:-0.45px;-webkit-text-stroke:0">SK_GB_...</div>
<svg style="left:337.5px;top:501px" width="12" height="12"><rect x="0.6" y="0.6" width="10.8" height="10.8" rx="1.2" fill="#1e2a33" stroke="#4b93c8" stroke-width="1.2"/><path d="M4.2 0.6 V11.4 M7.8 0.6 V11.4 M0.6 4.2 H11.4 M0.6 7.8 H11.4" stroke="#4b93c8" stroke-width="1.1"/></svg>
<div class="t" style="left:351.0px;top:503px;font-size:10px;line-height:11px;color:#b0b0b0;letter-spacing:-0.45px;-webkit-text-stroke:0">SK_GB_...</div>
<svg style="left:407.5px;top:501px" width="12" height="13"><path d="M6 1.5 L11.5 4 V10.5 L6 12.5 L0.5 10.5 V4Z" fill="#5fb5e8"/><path d="M0.5 4 L6 6.2 V12.5 L0.5 10.5Z" fill="#c8c8c8"/><path d="M2 2.5 L7.5 0.5 L11 2" fill="none" stroke="#5fb5e8" stroke-width="1"/></svg>
<div class="t" style="left:421.0px;top:503px;font-size:10px;line-height:11px;color:#b0b0b0;letter-spacing:-0.45px;-webkit-text-stroke:0">SK_GB_...</div>
<svg style="left:477px;top:501px" width="12" height="12"><rect x="0.6" y="0.6" width="10.8" height="10.8" rx="1.2" fill="#1e2a33" stroke="#4b93c8" stroke-width="1.2"/><path d="M4.2 0.6 V11.4 M7.8 0.6 V11.4 M0.6 4.2 H11.4 M0.6 7.8 H11.4" stroke="#4b93c8" stroke-width="1.1"/></svg>
<div class="t" style="left:490.5px;top:503px;font-size:10px;line-height:11px;color:#b0b0b0;letter-spacing:-0.45px;-webkit-text-stroke:0">SK_GB_...</div>
<svg style="left:548.5px;top:501px" width="12" height="13"><path d="M6 1.5 L11.5 4 V10.5 L6 12.5 L0.5 10.5 V4Z" fill="#5fb5e8"/><path d="M0.5 4 L6 6.2 V12.5 L0.5 10.5Z" fill="#c8c8c8"/><path d="M2 2.5 L7.5 0.5 L11 2" fill="none" stroke="#5fb5e8" stroke-width="1"/></svg>
<div class="t" style="left:562.0px;top:503px;font-size:10px;line-height:11px;color:#b0b0b0;letter-spacing:-0.45px;-webkit-text-stroke:0">SK_GB...</div>

<div class="a" style="left:0;top:531px;width:186px;height:30px;background:#3a3a3a;border-radius:0 5px 0 0"></div>
<svg style="left:60px;top:534px" width="54" height="14"><circle cx="27" cy="5" r="4.7" fill="#5ec8b4"/><path d="M10 14 L21 10.5 L21 14Z M44 14 L33 10.5 L33 14Z" fill="#5ec8b4"/><rect x="21.5" y="11" width="11" height="4" fill="#5ec8b4"/><path d="M23 11.5 H31" stroke="#3a3a3a" stroke-width="1.2"/></svg>
<svg style="left:152px;top:540px" width="16" height="8"><path d="M8 0 Q9.5 0 11 2.5 L15 8 H1 L5 2.5 Q6.5 0 8 0Z" fill="#5ec8b4"/></svg>
<svg style="left:17px;top:543px" width="8" height="5"><path d="M1 0.5 L6 4.5" stroke="#8a8a8a" stroke-width="1.6"/></svg>
<div class="a" style="left:200px;top:529px;width:52px;height:20px;background:#3a3a3a;border:1px solid #232323"></div>
<div class="a" style="left:269px;top:529px;width:53px;height:20px;background:#3a3a3a;border:1px solid #232323"></div>
<svg style="left:219px;top:535px" width="10" height="12"><circle cx="5" cy="2.5" r="2.2" fill="#1c1c1c"/><path d="M2.5 5 H7.5 L8 12 H2Z" fill="#222"/></svg>
<svg style="left:288px;top:535px" width="10" height="12"><circle cx="5" cy="2.5" r="2.2" fill="#1c1c1c"/><path d="M2.5 5 H7.5 L8 12 H2Z" fill="#222"/></svg>

</div></body></html>
